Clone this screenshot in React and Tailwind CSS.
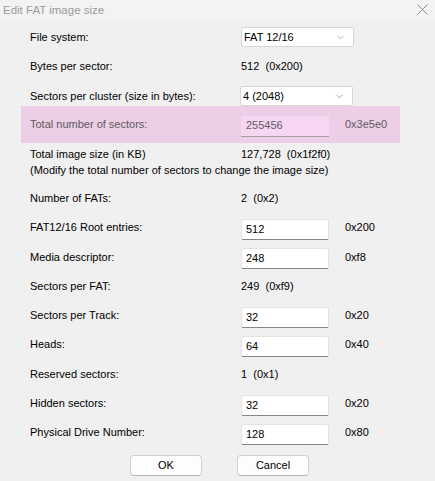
import { ChevronDown } from 'lucide-react';

const font = { fontFamily: '"Liberation Sans", Arial, sans-serif' };

function Field({ value }) {
  return (
    <div className="mt-[3px] w-[88px] h-[21px] bg-white border border-[#e3e3e3] border-b-[#868686] rounded-[2px] pl-[4px] flex items-center text-[11px] text-black">
      {value}
    </div>
  );
}

function Combo({ value }) {
  return (
    <div className="w-[113px] h-[20px] bg-white border border-[#d6d6d6] rounded-[2px] pl-[2px] pr-[7px] flex items-center justify-between text-[11px] text-black">
      <span>{value}</span>
      <ChevronDown size={11} strokeWidth={1.2} className="text-[#666]" />
    </div>
  );
}

function Row({ label, h = 'h-[29px]', children, hex }) {
  return (
    <div className={`flex items-center pl-[30px] ${h}`}>
      <div className="w-[211px] text-[11px] text-black">{label}</div>
      {children}
      {hex && <div className="ml-[16px] text-[11px] text-black">{hex}</div>}
    </div>
  );
}

function Value({ children }) {
  return <div className="whitespace-pre text-[11px] text-black">{children}</div>;
}

export default function App() {
  return (
    <div className="w-[435px] h-[481px] bg-[#f0f0f0] overflow-hidden select-none" style={font}>
      {/* Title bar */}
      <div className="h-[22px] bg-[#f3f3f3] flex items-center justify-between pl-[3px] pr-[7px]">
        <span className="text-[11.5px] text-[#9b9b9b]">Edit FAT image size</span>
        <svg width="11" height="11" viewBox="0 0 11 11" className="mt-[-3px]">
          <path d="M0.5 0.5 L10.5 10.5 M10.5 0.5 L0.5 10.5" stroke="#8a8a8a" strokeWidth="1" />
        </svg>
      </div>

      <Row label="File system:" h="h-[30px]">
        <Combo value="FAT 12/16" />
      </Row>
      <Row label="Bytes per sector:">
        <Value>512  (0x200)</Value>
      </Row>
      <div className="flex items-end pl-[30px] h-[25px]">
        <div className="w-[210px] text-[11px] leading-[20px] text-black">Sectors per cluster (size in bytes):</div>
        <Combo value="4 (2048)" />
      </div>

      {/* Highlighted row */}
      <div className="ml-[21px] w-[379px] h-[37px] bg-[#eccee7] flex items-center pl-[9px]">
        <div className="w-[211px] text-[11px] text-[#5f5a5e]">Total number of sectors:</div>
        <div className="mt-[3px] w-[88px] h-[21px] bg-[#f6d6f1] border-b border-[#a89aa6] pl-[5px] flex items-center text-[11px] text-[#5f5a5e]">
          255456
        </div>
        <div className="ml-[16px] text-[11px] text-[#5f5a5e]">0x3e5e0</div>
      </div>

      <div className="pt-[3px] pl-[30px] text-[11px] leading-[16px] text-black">
        <div className="flex">
          <div className="w-[211px]">Total image size (in KB)</div>
          <div className="whitespace-pre">127,728  (0x1f2f0)</div>
        </div>
        <div>(Modify the total number of sectors to change the image size)</div>
      </div>

      <div className="h-[6px]" />
      <Row label="Number of FATs:">
        <Value>2  (0x2)</Value>
      </Row>
      <Row label="FAT12/16 Root entries:" hex="0x200">
        <Field value="512" />
      </Row>
      <Row label="Media descriptor:" h="h-[30px]" hex="0xf8">
        <Field value="248" />
      </Row>
      <Row label="Sectors per FAT:">
        <Value>249  (0xf9)</Value>
      </Row>
      <Row label="Sectors per Track:" hex="0x20">
        <Field value="32" />
      </Row>
      <Row label="Heads:" hex="0x40">
        <Field value="64" />
      </Row>
      <Row label="Reserved sectors:" h="h-[30px]">
        <Value>1  (0x1)</Value>
      </Row>
      <Row label="Hidden sectors:" hex="0x20">
        <Field value="32" />
      </Row>
      <Row label="Physical Drive Number:" hex="0x80">
        <Field value="128" />
      </Row>

      {/* Buttons */}
      <div className="mt-[8px] pl-[130px] flex gap-[35px]">
        <button className="w-[72px] h-[21px] bg-[#fdfdfd] border border-[#d0d0d0] border-b-[#b5b5b5] rounded-[4px] text-[11px] text-black">
          OK
        </button>
        <button className="w-[72px] h-[21px] bg-[#fdfdfd] border border-[#d0d0d0] border-b-[#b5b5b5] rounded-[4px] text-[11px] text-black">
          Cancel
        </button>
      </div>
    </div>
  );
}
